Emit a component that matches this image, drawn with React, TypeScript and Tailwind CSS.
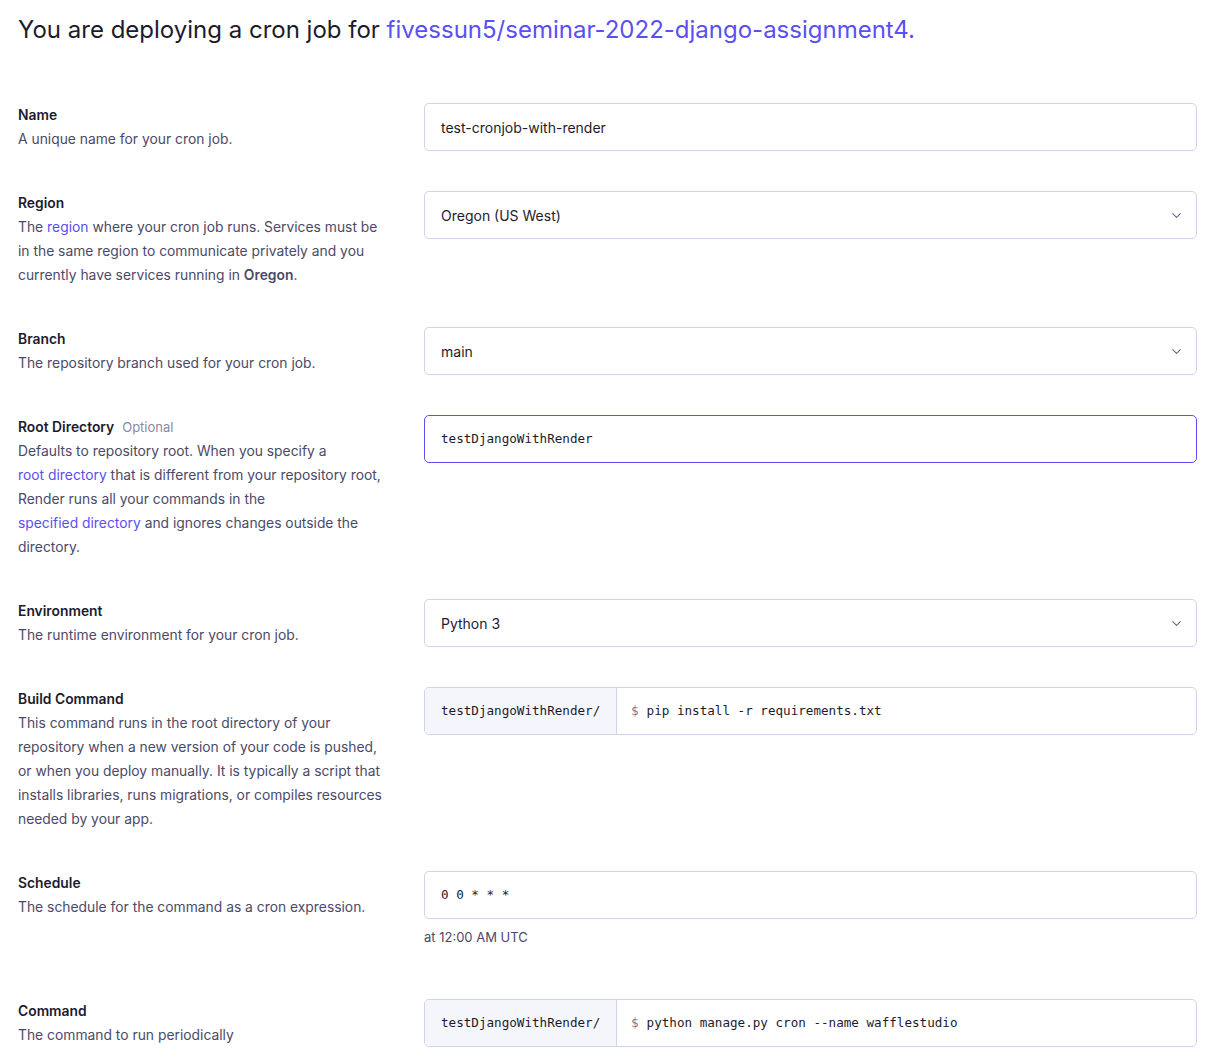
import { ChevronDown } from 'lucide-react';
import type { ReactNode } from 'react';

const mono = "font-['DejaVu_Sans_Mono',monospace]";

function Link({ children }: { children: ReactNode }) {
  return <span className="text-[#5a4ff3]">{children}</span>;
}

function Row({
  label,
  optional,
  desc,
  children,
}: {
  label: string;
  optional?: boolean;
  desc: ReactNode;
  children: ReactNode;
}) {
  return (
    <div className="flex gap-[34px]">
      <div className="w-[372px] shrink-0 text-[13.85px] leading-6">
        <div className="flex items-baseline gap-2">
          <span className="font-semibold text-[#1c1b2e]">{label}</span>
          {optional && <span className="text-[13px] text-[#8a88a8]">Optional</span>}
        </div>
        <div className="text-[#4b4a68]">{desc}</div>
      </div>
      <div className="flex-1">{children}</div>
    </div>
  );
}

function TextBox({ value, mono: isMono, focused }: { value: string; mono?: boolean; focused?: boolean }) {
  return (
    <div
      className={`h-12 flex items-center px-4 rounded-[5px] border bg-white text-[#1c1b2e] ${
        focused ? 'border-[#5a4ff3]' : 'border-[#cdd5ec]'
      } ${isMono ? `${mono} text-[12.6px]` : 'text-[14px]'}`}
    >
      {value}
    </div>
  );
}

function Select({ value }: { value: string }) {
  return (
    <div className="h-12 flex items-center justify-between pl-4 pr-[12px] rounded-[5px] border border-[#cdd5ec] bg-white text-[14px] text-[#1c1b2e]">
      <span>{value}</span>
      <ChevronDown className="w-[15px] h-[15px] text-[#6b6a86]" strokeWidth={1.75} />
    </div>
  );
}

function CmdBox({ cmd }: { cmd: string }) {
  return (
    <div className={`h-12 flex rounded-[5px] border border-[#cdd5ec] bg-white text-[12.6px] text-[#1c1b2e] overflow-hidden ${mono}`}>
      <div className="w-[192px] flex items-center px-4 bg-[#f5f6fc] border-r border-[#cdd5ec]">testDjangoWithRender/</div>
      <div className="flex items-center pl-[14px] gap-2">
        <span className="text-[#7a7994]">$</span>
        <span>{cmd}</span>
      </div>
    </div>
  );
}

export default function App() {
  return (
    <div className="min-h-screen bg-white pl-[18px] pr-[11px] pt-[14px] font-['Inter','Noto_Sans',sans-serif]">
      <h1 className="text-[24px] leading-8 text-[#1c1b2e] mb-[57px]">
        You are deploying a cron job for <Link>fivessun5/seminar-2022-django-assignment4.</Link>
      </h1>
      <div className="flex flex-col gap-10">
        <Row label="Name" desc="A unique name for your cron job.">
          <TextBox value="test-cronjob-with-render" />
        </Row>
        <Row
          label="Region"
          desc={
            <>
              The <Link>region</Link> where your cron job runs. Services must be in the same region to communicate
              privately and you currently have services running in <span className="font-semibold">Oregon</span>.
            </>
          }
        >
          <Select value="Oregon (US West)" />
        </Row>
        <Row label="Branch" desc="The repository branch used for your cron job.">
          <Select value="main" />
        </Row>
        <Row
          label="Root Directory"
          optional
          desc={
            <>
              Defaults to repository root. When you specify a<br />
              <Link>root directory</Link> that is different from your repository root, Render runs all your commands in
              the<br />
              <Link>specified directory</Link> and ignores changes outside the directory.
            </>
          }
        >
          <TextBox value="testDjangoWithRender" mono focused />
        </Row>
        <Row label="Environment" desc="The runtime environment for your cron job.">
          <Select value="Python 3" />
        </Row>
        <Row
          label="Build Command"
          desc="This command runs in the root directory of your repository when a new version of your code is pushed, or when you deploy manually. It is typically a script that installs libraries, runs migrations, or compiles resources needed by your app."
        >
          <CmdBox cmd="pip install -r requirements.txt" />
        </Row>
        <Row label="Schedule" desc="The schedule for the command as a cron expression.">
          <TextBox value="0 0 * * *" mono />
          <div className="mt-[6px] pb-[10px] text-[13px] leading-6 text-[#4b4a68]">at 12:00 AM UTC</div>
        </Row>
        <Row label="Command" desc="The command to run periodically">
          <CmdBox cmd="python manage.py cron --name wafflestudio" />
        </Row>
      </div>
    </div>
  );
}
